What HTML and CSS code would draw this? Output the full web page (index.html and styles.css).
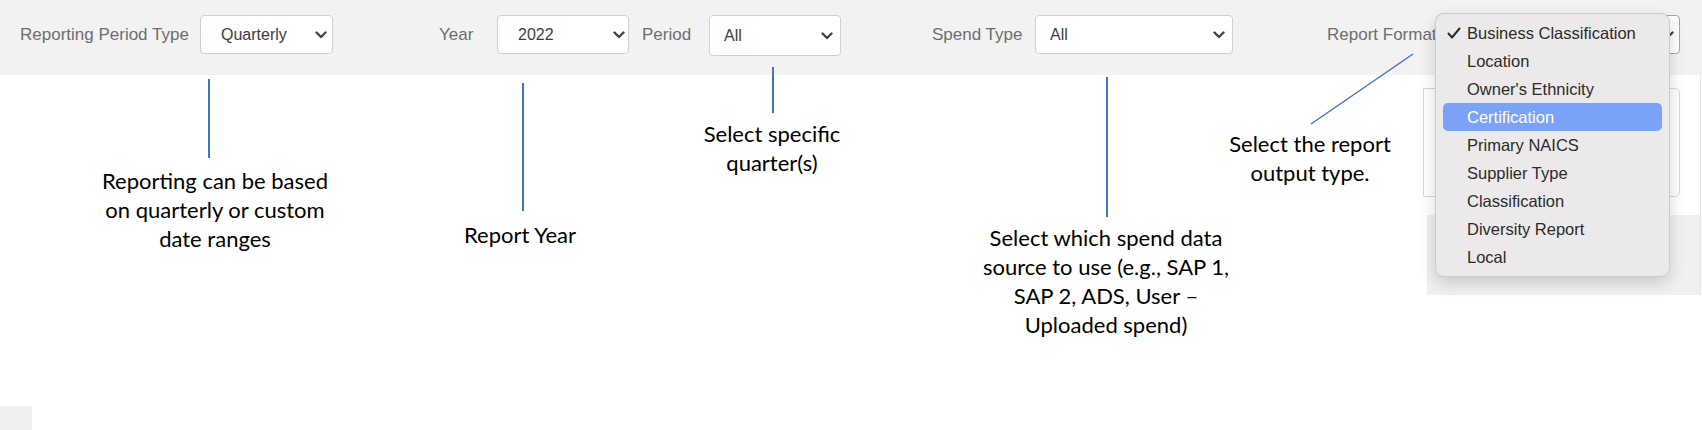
FILE: index.html
```html
<!DOCTYPE html>
<html lang="en">
  <head>
    <meta http-equiv="Content-type" content="text/html; charset=utf-8">
    <title>Report Filters</title>
    <link rel="stylesheet" href="styles.css">
  </head>
  <body>
    <div class="page">
      <div class="toolbar">
        <span class="label label-type">Reporting Period Type</span>
        <div class="select select-type">
          <span>Quarterly</span>
          <svg class="chevron" viewBox="0 0 12 8"><polyline points="1.5,1.5 6,6 10.5,1.5"/></svg>
        </div>
        <span class="label label-year">Year</span>
        <div class="select select-year">
          <span>2022</span>
          <svg class="chevron" viewBox="0 0 12 8"><polyline points="1.5,1.5 6,6 10.5,1.5"/></svg>
        </div>
        <span class="label label-period">Period</span>
        <div class="select select-period">
          <span>All</span>
          <svg class="chevron" viewBox="0 0 12 8"><polyline points="1.5,1.5 6,6 10.5,1.5"/></svg>
        </div>
        <span class="label label-spend">Spend Type</span>
        <div class="select select-spend">
          <span>All</span>
          <svg class="chevron" viewBox="0 0 12 8"><polyline points="1.5,1.5 6,6 10.5,1.5"/></svg>
        </div>
        <span class="label label-format">Report Format</span>
        <!-- value is covered by the open menu -->
        <div class="select select-format">
          <span></span>
          <svg class="chevron" viewBox="0 0 12 8"><polyline points="1.5,1.5 6,6 10.5,1.5"/></svg>
        </div>
      </div>
      <div class="content">
        <div class="corner"></div>
      </div>

      <!-- piece of the page behind the open menu -->
      <div class="preview">
        <div class="preview-card"></div>
        <div class="preview-foot"></div>
      </div>

      <ul class="menu">
        <li>
          <svg class="check" viewBox="0 0 14 12"><polyline points="1.5,6.5 5,10.5 12.5,1.5"/></svg>
          Business Classification
        </li>
        <li>Location</li>
        <li>Owner's Ethnicity</li>
        <li class="active">Certification</li>
        <li>Primary NAICS</li>
        <li>Supplier Type</li>
        <li>Classification</li>
        <li>Diversity Report</li>
        <li>Local</li>
      </ul>

      <!-- callouts -->
      <svg class="leaders" viewBox="0 0 1702 430">
        <line x1="209" y1="79" x2="209" y2="158"/>
        <line x1="523" y1="83" x2="523" y2="211"/>
        <line x1="773" y1="67" x2="773" y2="113"/>
        <line x1="1107" y1="77" x2="1107" y2="217"/>
        <line class="thin" x1="1413" y1="54" x2="1311" y2="124"/>
      </svg>
      <div class="note note-type">Reporting can be based<br>on quarterly or custom<br>date ranges</div>
      <div class="note note-year">Report Year</div>
      <div class="note note-period">Select specific<br>quarter(s)</div>
      <div class="note note-spend">Select which spend data<br>source to use (e.g., SAP 1,<br>SAP 2, ADS, User &ndash;<br>Uploaded spend)</div>
      <div class="note note-format">Select the report<br>output type.</div>
    </div>
  </body>
</html>
```

FILE: styles.css
```css
html, body{
     margin: 0;
     padding: 0;
     height: 100%;
}
body{
     background-color: #fff;
     font-family: "Liberation Sans", Arial, sans-serif;
}
.page{
     position: relative;
     width: 1702px;
     height: 430px;
     overflow: hidden;
     display: flex;
     flex-direction: column;
}

/* filter bar */
.toolbar{
     height: 75px;
     box-sizing: border-box;
     padding-top: 15px;
     background-color: #f2f2f2;
     display: flex;
     align-items: flex-start;
}
.label{
     font-size: 17px;
     line-height: 39px;
     color: #6e6e6e;
     white-space: nowrap;
}
.label-type{ margin-left: 20px; width: 180px; }
.label-year{ margin-left: 106px; width: 58px; }
.label-period{ margin-left: 13px; width: 67px; }
.label-spend{ margin-left: 91px; width: 103px; }
.label-format{ margin-left: 94px; width: 108px; margin-right: 1px; }

.select{
     box-sizing: border-box;
     height: 39px;
     background-color: #fff;
     border: 1px solid #d0d0d0;
     border-radius: 4px;
     display: flex;
     align-items: center;
     justify-content: space-between;
     font-size: 16px;
     color: #3d3d3d;
     white-space: nowrap;
     overflow: hidden;
     padding: 0 5px 0 20px;
}
.chevron{
     width: 12px;
     height: 8px;
     flex-shrink: 0;
     fill: none;
     stroke: #444;
     stroke-width: 2.4;
     stroke-linecap: round;
     stroke-linejoin: round;
}
.select-type{ width: 133px; }
.select-year{ width: 132px; padding-right: 3px; }
.select-period{ width: 132px; height: 41px; padding-left: 14px; padding-right: 7px; }
.select-spend{ width: 198px; padding-left: 14px; padding-right: 7px; }
.select-format{ width: 244px; border-color: #86a8e6; padding-right: 5px; }

.content{
     flex: 1;
     display: flex;
     align-items: flex-end;
}
.corner{
     width: 32px;
     height: 24px;
     background-color: #f0f0f0;
}

/* page area under the dropdown */
.preview{
     position: absolute;
     left: 1423px;
     top: 75px;
     width: 277px;
     height: 220px;
     border-right: 1px solid #e4e4e4;
}
.preview-card{
     box-sizing: border-box;
     margin-top: 13px;
     width: 257px;
     height: 109px;
     border: 1px solid #d8d8d8;
     border-radius: 0 5px 5px 0;
}
.preview-foot{
     margin-top: 18px;
     margin-left: 4px;
     height: 80px;
     background-color: #f0f0f0;
}

/* open native menu */
.menu{
     position: absolute;
     left: 1435px;
     top: 13px;
     width: 235px;
     box-sizing: border-box;
     margin: 0;
     padding: 5px 0;
     list-style: none;
     background-color: #ebe9ea;
     border: 1px solid #cdcbcc;
     border-radius: 9px;
     box-shadow: 0 6px 16px rgba(0,0,0,0.16);
     font-size: 16.5px;
     color: #2b2b2b;
}
.menu li{
     position: relative;
     height: 28px;
     line-height: 28px;
     margin: 0 7px;
     padding-left: 24px;
     border-radius: 5px;
     white-space: nowrap;
}
.menu li.active{
     background-color: #7aa3f7;
     color: #fff;
}
.check{
     position: absolute;
     left: 4px;
     top: 8px;
     width: 14px;
     height: 12px;
     fill: none;
     stroke: #2b2b2b;
     stroke-width: 2;
     stroke-linecap: round;
     stroke-linejoin: round;
}

/* callouts */
.leaders{
     position: absolute;
     left: 0;
     top: 0;
     width: 1702px;
     height: 430px;
     pointer-events: none;
}
.leaders line{
     stroke: #4472c4;
     stroke-width: 2;
}
.leaders line.thin{
     stroke-width: 1.5;
}
.note{
     position: absolute;
     transform: translateX(-50%);
     font-family: Lato, "Liberation Sans", sans-serif;
     font-size: 22px;
     line-height: 29px;
     color: #000;
     text-align: center;
     white-space: nowrap;
}
.note-type{ left: 215px; top: 166px; }
.note-year{ left: 520px; top: 220px; }
.note-period{ left: 772px; top: 119px; }
.note-spend{ left: 1106px; top: 223px; }
.note-format{ left: 1310px; top: 129px; }
```
